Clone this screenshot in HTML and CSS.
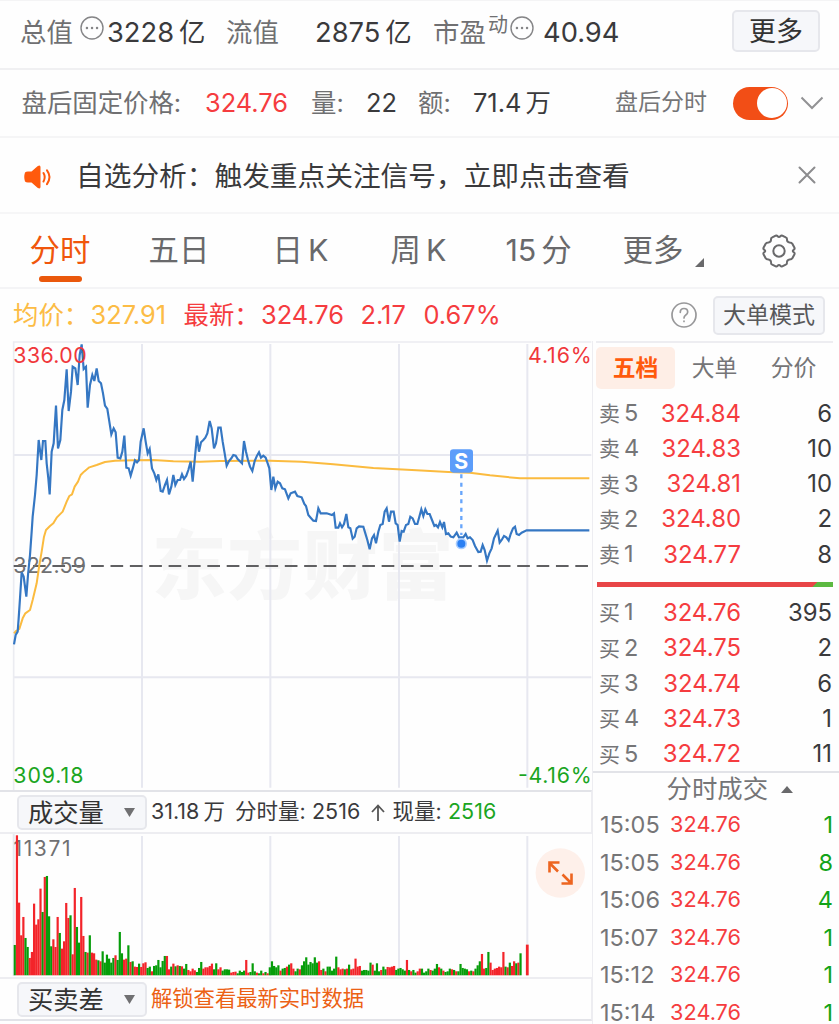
FILE: index.html
```html
<!DOCTYPE html>
<html lang="zh-CN">
<head>
    <meta charset="UTF-8">
    <meta name="viewport" content="width=device-width, initial-scale=1.0">
    <title>分时行情</title>
    <link rel="stylesheet" href="styles.css">
</head>
<body>

<div class="stats">
    <span class="label">总值</span>
    <svg class="dots" viewBox="0 0 24 24"><circle cx="12" cy="12" r="11"/><path d="M6.9 12h.1M12 12h.1M17 12h.1"/></svg>
    <span class="num">3228<i>亿</i></span>
    <span class="label">流值</span>
    <span class="num">2875<i>亿</i></span>
    <span class="label">市盈</span>
    <span class="sup">动</span>
    <svg class="dots" viewBox="0 0 24 24"><circle cx="12" cy="12" r="11"/><path d="M6.9 12h.1M12 12h.1M17 12h.1"/></svg>
    <span class="num">40.94</span>
    <button class="more">更多</button>
</div>

<div class="after-hours">
    <span class="label">盘后固定价格:</span>
    <span class="red">324.76</span>
    <span class="label">量:</span>
    <span>22</span>
    <span class="label">额:</span>
    <span>71.4<i>万</i></span>
    <span class="switch-label">盘后分时</span>
    <span class="switch"></span>
    <svg class="chevron" viewBox="0 0 24 14"><path d="M1.5 1.5 12 12 22.5 1.5"/></svg>
</div>

<div class="notice">
    <svg class="horn" viewBox="0 0 30 24">
        <path class="fill" d="M2 7.5q1-1 3-1h3.500L14.500 1.300q3-1.800 3 1v19.400q0 2.800-3 1L8.500 17.500H5q-2 0-3-1-1.500-4.500 0-9z"/>
        <path d="M20.500 8q2.400 4 0 8.500M24 5.300q5 6.700 0 13.800"/>
    </svg>
    <span class="notice-text">自选分析：触发重点关注信号，立即点击查看</span>
    <svg class="close" viewBox="0 0 18 18"><path d="M1.500 1.500l15 15M16.500 1.500l-15 15"/></svg>
</div>

<nav class="tabs">
    <a class="active">分时</a>
    <a>五日</a>
    <a>日<b>K</b></a>
    <a>周<b>K</b></a>
    <a>15<b>分</b></a>
    <a>更多<svg class="corner" viewBox="0 0 9 9"><path d="M9 0v9H0z"/></svg></a>
    <svg class="gear" viewBox="0 0 36 36">
        <path d="M14.200 2.900 Q15.200 1.800 16.600 3.300 Q18 4.800 19.400 3.300 Q20.800 1.800 21.800 2.900 L24.800 4.300 Q26.200 4.900 26 6.600 Q25.900 9.200 28.600 9.600 Q30.800 9.700 31.200 10.600 L33.500 14.800 Q34 16 32.600 16.900 Q30.900 18 32.600 19.200 Q34 20 33.500 21.200 L31.200 25.400 Q30.800 26.300 28.600 26.400 Q25.900 26.800 26 29.400 Q26.200 31.100 24.800 31.700 L21.800 33.100 Q20.800 34.200 19.400 32.700 Q18 31.200 16.600 32.700 Q15.200 34.200 14.200 33.100 L11.200 31.700 Q9.800 31.100 10 29.400 Q10.100 26.800 7.400 26.400 Q5.200 26.300 4.800 25.400 L2.500 21.200 Q2 20 3.400 19.200 Q5.100 18 3.400 16.900 Q2 16 2.500 14.800 L4.800 10.600 Q5.200 9.700 7.400 9.600 Q10.100 9.200 10 6.600 Q9.800 4.900 11.200 4.300 Z"/>
        <circle cx="18" cy="18" r="5.700"/>
    </svg>
</nav>

<div class="quote">
    <span class="yellow">均价：</span>
    <span class="yellow">327.91</span>
    <span class="red">最新：</span>
    <span class="red">324.76</span>
    <span class="red">2.17</span>
    <span class="red">0.67%</span>
    <svg class="help" viewBox="0 0 26 26"><circle cx="13" cy="13" r="12"/><path d="M9.300 10.300q0-3.800 3.700-3.800t3.700 3.500q0 1.700-1.900 3-1.800 1.200-1.800 3"/><path d="M13 19.200v.2"/></svg>
    <button class="mode">大单模式</button>
</div>

<main>
    <section class="charts">
        <!-- three units per pixel -->
        <svg class="price-chart" viewBox="0 18 1776 1347">
            <text class="watermark" x="455" y="773" textLength="905">东方财富</text>
            <g class="grid">
                <path d="M426 27V1358M811 27V1358M1197 27V1358M1582 27V1358M41 360H1774M41 1027H1774"/>
                <path class="frame" d="M41 1366V21H1774"/>
            </g>
            <path class="base" d="M41 693H1768"/>
            <text class="axis gray" x="40" y="715" textLength="218">322.59</text>
            <polyline class="avg" points="42,895 48,888 58,882 68,850 76,835 90,825 98,795 110,745 118,690 125,650 132,605 138,585 150,573 160,565 170,548 188,530 200,500 208,483 216,478 224,455 234,440 242,420 252,410 268,397 290,390 315,381 345,377 400,376 460,375 520,379 600,380 660,378 810,377 905,380 1000,388 1120,399 1250,406 1345,411 1410,413 1470,421 1560,430 1768,430"/>
            <polyline class="price" points="42,928 47,900 53,890 56,850 60,790 65,712 71,725 79,785 84,720 90,660 95,590 98,545 105,480 110,420 116,315 124,375 129,318 136,318 140,385 145,430 149,478 155,350 161,325 168,212 174,340 181,315 187,225 193,195 200,103 206,228 213,170 218,95 226,100 233,150 239,60 245,28 251,102 258,95 263,218 270,150 277,120 283,138 290,100 296,138 303,145 309,175 315,212 322,222 328,260 334,298 341,280 347,292 353,368 361,370 367,350 373,302 379,398 386,400 392,422 399,398 405,376 411,382 417,375 422,320 431,280 437,320 443,355 449,342 456,400 463,415 469,435 475,418 482,468 488,470 495,450 501,435 507,478 514,455 520,420 526,450 533,435 540,435 546,418 552,432 559,422 565,405 572,380 578,440 585,365 591,302 597,350 603,322 610,315 616,308 622,295 629,258 635,280 642,340 648,325 655,278 662,278 668,320 674,355 680,392 687,378 694,370 700,360 707,362 713,372 719,378 726,385 732,318 738,350 744,375 750,395 757,408 764,378 771,362 777,352 783,368 790,362 797,368 803,385 808,400 814,465 820,425 826,460 833,440 840,445 847,460 855,463 865,490 872,475 885,470 892,483 905,487 913,507 918,513 925,540 932,548 940,557 948,558 955,520 962,535 980,535 996,540 1002,535 1007,578 1015,578 1020,565 1026,577 1032,567 1039,537 1045,577 1051,580 1058,611 1064,605 1070,580 1077,574 1090,575 1096,595 1102,615 1109,643 1116,610 1122,600 1128,625 1135,590 1141,570 1148,567 1154,530 1160,520 1167,560 1173,530 1181,530 1187,565 1193,570 1199,620 1205,588 1211,590 1218,570 1225,567 1231,545 1238,550 1245,567 1252,567 1258,545 1264,523 1270,543 1276,523 1282,537 1289,537 1296,555 1303,573 1308,570 1314,577 1320,561 1327,577 1332,561 1338,597 1345,595 1352,605 1360,607 1370,593 1377,607 1390,607 1397,597 1403,610 1410,607 1418,615 1425,633 1435,651 1442,650 1448,630 1454,645 1461,677 1468,655 1475,640 1482,610 1493,587 1499,623 1505,615 1512,603 1519,607 1526,617 1532,597 1539,580 1545,575 1550,597 1557,600 1565,593 1580,586 1768,586"/>
            <path class="lead" d="M1384 418V600"/>
            <circle class="halo" cx="1384" cy="626" r="17"/>
            <circle class="dot" cx="1384" cy="626" r="12"/>
            <rect class="mark" x="1350" y="343" width="69" height="70" rx="10"/>
            <text class="mark-text" x="1384" y="402">S</text>
            <text class="axis red" x="40" y="85" textLength="220">336.00</text>
            <text class="axis red end" x="1775" y="85" textLength="191">4.16%</text>
            <text class="axis green" x="40" y="1344" textLength="210">309.18</text>
            <text class="axis green end" x="1775" y="1344" textLength="221">-4.16%</text>
        </svg>

        <div class="bar">
            <button class="select">成交量<svg viewBox="0 0 11 9"><path d="M0 0h11L5.500 9z"/></svg></button>
            <span class="vol-total">31.18<i>万</i></span>
            <span class="vol-label">分时量:</span>
            <span class="vol-num">2516</span>
            <svg class="up" viewBox="0 0 14 17"><path d="M7 17V2M1 8l6-6.500L13 8"/></svg>
            <span class="vol-now">现量:</span>
            <span class="green">2516</span>
        </div>

        <svg class="volume-chart" viewBox="0 0 592 143">
            <path class="grid-line" d="M142 2V142M270.300 2V142M399 2V142M527.300 2V142M13.700 0V142"/>
            <text class="axis-small" x="13.500" y="22" textLength="57">11371</text>
            <g id="volume"></g>
            <circle class="expand-bg" cx="560.300" cy="39" r="24.700"/>
            <path class="expand" d="M558 37.500 549.500 29M549.500 38.500V28.500H559.500M562.500 40.500 571 49M571.500 39.500V49.500H561.500"/>
        </svg>

        <div class="bar bottom">
            <button class="select">买卖差<svg viewBox="0 0 11 9"><path d="M0 0h11L5.500 9z"/></svg></button>
            <span class="unlock">解锁查看最新实时数据</span>
        </div>
    </section>

    <aside class="book">
        <div class="book-tabs">
            <a class="active">五档</a>
            <a>大单</a>
            <a>分价</a>
        </div>
        <div class="orders">
            <div><span>卖<b>5</b></span><em>324.84</em><strong>6</strong></div>
            <div><span>卖<b>4</b></span><em>324.83</em><strong>10</strong></div>
            <div><span>卖<b>3</b></span><em>324.81</em><strong>10</strong></div>
            <div><span>卖<b>2</b></span><em>324.80</em><strong>2</strong></div>
            <div><span>卖<b>1</b></span><em>324.77</em><strong>8</strong></div>
        </div>
        <div class="ratio"></div>
        <div class="orders">
            <div><span>买<b>1</b></span><em>324.76</em><strong>395</strong></div>
            <div><span>买<b>2</b></span><em>324.75</em><strong>2</strong></div>
            <div><span>买<b>3</b></span><em>324.74</em><strong>6</strong></div>
            <div><span>买<b>4</b></span><em>324.73</em><strong>1</strong></div>
            <div><span>买<b>5</b></span><em>324.72</em><strong>11</strong></div>
        </div>
        <div class="deals-title">分时成交<svg viewBox="0 0 12 7"><path d="M0 7 6 0l6 7z"/></svg></div>
        <div class="deals">
            <div><span>15:05</span><em>324.76</em><strong>1</strong></div>
            <div><span>15:05</span><em>324.76</em><strong>8</strong></div>
            <div><span>15:06</span><em>324.76</em><strong>4</strong></div>
            <div><span>15:07</span><em>324.76</em><strong>1</strong></div>
            <div><span>15:12</span><em>324.76</em><strong>1</strong></div>
            <div><span>15:14</span><em>324.76</em><strong>1</strong></div>
        </div>
    </aside>
</main>

<script src="script.js"></script>
</body>
</html>
```
FILE: styles.css
```css
* {
    box-sizing: border-box;
}

body {
    margin: 0;
    width: 839px;
    height: 1024px;
    overflow: hidden;
    background: #fefefe;
    color: #3a3a3c;
    font-family: Inter, "Noto Sans CJK SC", sans-serif;
    font-size: 25.400px;
    line-height: 1.2;
}

i, em {
    font-style: normal;
}

b, strong {
    font-weight: 400;
}

button {
    padding: 0;
    font-family: inherit;
    color: #333;
    background: #f6f7fa;
    border: 2px solid #e6e7ec;
    border-radius: 5px;
}

svg {
    display: block;
    fill: none;
}

.red {
    color: #f53c3f;
    fill: #f0373b;
}

.green {
    color: #1ba51f;
    fill: #1ba51f;
}

.yellow {
    color: #fcbc45;
}

.label {
    color: #707072;
}

/* market value row */
.stats {
    display: grid;
    grid-template-columns: 59px 27px 120px 88px 119px 54px 22px 33px 189px 88px;
    align-items: center;
    height: 70px;
    padding: 0 0 3px 21px;
    border-top: 1px solid #f4f4f5;
    border-bottom: 2px solid #f0f0f2;
    font-size: 26.400px;
    white-space: nowrap;
}

.stats .label {
    margin-left: -1px;
}

.stats .num {
    font-size: 27.300px;
}

.stats .num i {
    margin-left: 5px;
    font-size: 26.400px;
}

.sup {
    align-self: start;
    margin-top: 8px;
    line-height: 32px;
    font-size: 20px;
    color: #707072;
}

.dots {
    width: 24px;
    height: 24px;
    align-self: start;
    margin-top: 15px;
    stroke: #858587;
    stroke-width: 1.4;
}

.dots path {
    stroke-width: 2.4;
    stroke-linecap: round;
}

.more {
    height: 42px;
    align-self: start;
    margin-top: 9px;
    padding-top: 2px;
    font-size: 27px;
    line-height: 36px;
}

/* after-hours row */
.after-hours {
    display: grid;
    grid-template-columns: 182.500px 107px 54px 53px 54px 142px 118px 67px 25px;
    align-items: center;
    height: 68px;
    padding-left: 22.500px;
    border-bottom: 2px solid #f5f5f6;
    white-space: nowrap;
}

.after-hours .label {
    margin-left: -1px;
}

.after-hours i {
    margin-left: 4px;
}

.after-hours .switch-label {
    color: #757577;
    font-size: 23px;
}

.switch {
    display: flex;
    justify-content: flex-end;
    width: 55px;
    height: 33px;
    padding: 1.500px;
    border-radius: 17px;
    background: #f24e16;
}

.switch::after {
    content: "";
    width: 30px;
    height: 30px;
    border-radius: 50%;
    background: #fff;
}

.chevron {
    width: 24px;
    height: 14px;
    stroke: #929294;
    stroke-width: 2;
}

/* notice */
.notice {
    display: flex;
    align-items: center;
    height: 76px;
    padding: 0 23px 0 23px;
    border-bottom: 2px solid #f6f6f7;
}

.horn {
    width: 30px;
    height: 24px;
    margin-top: 3px;
    stroke: #ff5a0c;
    stroke-width: 2;
    stroke-linecap: round;
}

.horn .fill {
    fill: #ff5a0c;
    stroke: none;
}

.notice-text {
    margin: 3px 0 0 23px;
    font-size: 27.700px;
}

.close {
    width: 18px;
    height: 18px;
    margin-left: auto;
    stroke: #8c8c8e;
    stroke-width: 2;
    stroke-linecap: round;
}

/* period tabs */
.tabs {
    display: grid;
    grid-template-columns: 119px 124px 118px 115px 117px 138px 36px;
    height: 75px;
    padding-left: 29.500px;
    border-bottom: 2px solid #f4f4f6;
    align-items: center;
    font-size: 30.400px;
    color: #69696b;
    white-space: nowrap;
}

.tabs a {
    display: flex;
    align-items: center;
    height: 73px;
    line-height: 73px;
}

.tabs b {
    margin-left: 5px;
}

.tabs .active {
    position: relative;
    color: #f0560c;
}

.tabs .active::after {
    content: "";
    position: absolute;
    left: 9.500px;
    bottom: 5px;
    width: 43px;
    height: 6px;
    border-radius: 3px;
    background: #ea580c;
}

.corner {
    width: 9px;
    height: 9px;
    margin: 24px 0 0 12px;
    fill: #69696b;
}

.gear {
    width: 36px;
    height: 36px;
    stroke: #69696b;
    stroke-width: 2;
}

/* quote line */
.quote {
    display: grid;
    grid-template-columns: 77.500px 93px 77.500px 99.500px 63px 247px 42.500px 112px;
    align-items: center;
    height: 52px;
    padding-left: 13px;
    white-space: nowrap;
}

.help {
    width: 26px;
    height: 26px;
    stroke: #98989a;
    stroke-width: 1.700;
    stroke-linecap: round;
}

.mode {
    height: 39px;
    font-size: 23px;
    line-height: 33px;
    color: #58585a;
}

main {
    display: flex;
}

.charts {
    width: 592px;
    flex: none;
}

.price-chart {
    width: 592px;
    height: 449px;
}

.grid {
    stroke: #e7e8f0;
    stroke-width: 6;
}

.grid .frame {
    stroke: #ebecf1;
    stroke-width: 5;
}

.base {
    stroke: #606062;
    stroke-width: 5.500;
    stroke-dasharray: 38 20.100;
}

.avg {
    stroke: #fbbb3f;
    stroke-width: 6;
    stroke-linejoin: round;
}

.price {
    stroke: #3577c3;
    stroke-width: 6.500;
}

.axis {
    font-size: 64px;
}

.end {
    text-anchor: end;
}

.gray {
    fill: #707072;
}

.watermark {
    font: 900 224px "Noto Sans CJK SC", sans-serif;
    fill: #f6f6f6;
}

.lead {
    stroke: #67a5fb;
    stroke-width: 7;
    stroke-dasharray: 12 13;
}

.halo {
    fill: #a7ccff;
}

.dot {
    fill: #2b80f3;
}

.mark {
    fill: #5c9dfa;
}

.mark-text {
    font-size: 64px;
    font-weight: 700;
    text-anchor: middle;
    fill: #fff;
}

.bar {
    display: flex;
    align-items: center;
    height: 44px;
    padding-left: 17px;
    border-top: 2px solid #e2e3e8;
    border-bottom: 2px solid #ededf1;
    border-right: 1px solid #ededf1;
    font-size: 21.500px;
    white-space: nowrap;
}

.select {
    display: flex;
    align-items: center;
    width: 130px;
    height: 35px;
    padding-left: 9px;
    font-size: 25.300px;
    line-height: 31px;
}

.select svg {
    width: 11px;
    height: 9px;
    margin-left: 20px;
    fill: #707072;
}

.vol-total {
    width: 84px;
    margin-left: 4px;
}

.vol-total i {
    margin-left: 4px;
}

.vol-label {
    width: 77px;
}

.vol-num {
    width: 58.500px;
}

.up {
    width: 14px;
    height: 17px;
    stroke: #555;
    stroke-width: 1.800;
}

.vol-now {
    width: 55.500px;
    margin-left: 8px;
}

.volume-chart {
    width: 592px;
    height: 143px;
}

.grid-line {
    stroke: #e7e8f0;
    stroke-width: 2;
}

.axis-small {
    font-size: 21px;
    fill: #707072;
}

.up-bar {
    fill: #f3242a;
}

.down-bar {
    fill: #069d0a;
}

.expand-bg {
    fill: #fef0ea;
}

.expand {
    stroke: #ed6520;
    stroke-width: 2.600;
}

.bottom {
    border-top-color: #ededf1;
    border-bottom-color: #e2e3e8;
}

.unlock {
    margin-left: 4px;
    font-size: 21.300px;
    color: #ec6115;
}

/* order book */
.book {
    width: 247px;
    flex: none;
    height: 683px;
    border-left: 1px solid #ededf1;
    padding: 0 6px 0 4px;
}

.book-tabs {
    display: flex;
    height: 54px;
    padding-top: 4px;
    margin: 0 0 0 -1px;
    border-top: 2px solid #ededf1;
    font-size: 22.800px;
    line-height: 42px;
    color: #757577;
}

.book-tabs a {
    width: 79px;
    flex: none;
    height: 42px;
    text-align: center;
    border-radius: 5px;
}

.book-tabs .active {
    background: #feeee6;
    color: #ff5a0c;
    font-weight: 700;
}

.orders div, .deals div {
    display: grid;
    grid-template-columns: 58px 84px 1fr;
    align-items: center;
    height: 35.300px;
    padding: 0 1px 0 2px;
    font-size: 23.900px;
    line-height: 35px;
}

.orders span {
    font-size: 21px;
    color: #757577;
}

.orders b {
    margin-left: 4px;
    font-size: 23.500px;
}

.orders em, .deals em {
    text-align: right;
    color: #f53c3f;
}

.orders strong, .deals strong {
    text-align: right;
}

.ratio {
    height: 5px;
    margin: 10.500px 0 7.500px;
    background: linear-gradient(135deg, #e84547 155.500px, #5cb941 156px);
}

.deals-title {
    display: flex;
    align-items: center;
    height: 35px;
    margin: 0 -6px 0 -4px;
    padding-left: 73.500px;
    border-top: 2px solid #e2e3e8;
    color: #757577;
}

.deals-title svg {
    width: 12px;
    height: 7px;
    margin-left: 13px;
    fill: #69696b;
}

.deals div {
    height: 37.500px;
    padding: 0 0 0 3px;
    grid-template-columns: 61px 80px 1fr;
    font-size: 23.500px;
}

.deals span {
    color: #757577;
}

.deals em {
    font-size: 21.700px;
}

.deals strong {
    color: #12a318;
}
```
FILE: script.js
```js
// one entry per minute: r = up, g = down, followed by the bar height
const minutes = `g91 r420 r218 r120 r175 g112 g85 r52 r70 r215 r152 r168 r260 g190 r295 g298 g177 g87 r108 r85
r175 g127 r80 r102 r217 r172 g180 r63 r262 g145 g98 r235 r118 g70 r68 g120 r68 r66 r47 g45
r42 g72 g38 g62 g50 g38 g52 r60 g46 g130 g66 r47 r50 g90 r40 g42 r26 r25 g35 r25
r36 r39 g22 g26 r12 g28 g30 g46 g24 g43 g58 r58 r18 g26 r35 g27 r30 g28 r27 g20
g34 r16 r12 r20 r15 g10 g22 g40 r20 r24 r24 r28 r35 g18 g36 r18 r24 g14 g18 g18
g17 r8 r10 r11 g6 g14 g10 g14 r46 r8 g10 g36 g12 r8 g6 g14 r6 g10 r6 g24
g42 g28 g24 g30 r14 g20 g22 r26 g32 r36 r20 g12 g20 r18 g30 g42 g54 g32 g40 g36
g54 g38 r42 r16 g20 r12 g26 g26 g14 g20 g56 r24 r18 r20 g18 r20 g32 r18 r20 r50
r26 r28 g14 g16 g16 g14 g38 r32 g14 g36 g12 r16 g26 g18 r25 r24 r26 r28 g16 g20
g22 g18 g14 r46 g16 r12 g16 g8 r12 r20 g20 g8 g12 g20 r16 g14 g20 g34 r24 g20
r14 g10 g12 g20 r18 g16 r12 g12 g34 g22 g20 g18 r12 g14 r12 g20 g30 g42 r64 r20
g22 g70 r38 r16 r20 r22 r26 r24 r70 g26 r24 g38 r28 r42 g36 r38 g66 r0 r0 r92`.split(/\s+/);

const step = 2.143;
const base = 141.3;
const volume = document.getElementById('volume');

minutes.forEach((item, index) => {
    const height = Number(item.slice(1)) / 3;
    const rect = document.createElementNS('http://www.w3.org/2000/svg', 'rect');
    rect.setAttribute('class', item[0] === 'r' ? 'up-bar' : 'down-bar');
    rect.setAttribute('x', 13.7 + index * step);
    rect.setAttribute('y', base - height);
    rect.setAttribute('width', index === minutes.length - 1 ? 2.8 : 2.2);
    rect.setAttribute('height', height);
    volume.appendChild(rect);
});
```
